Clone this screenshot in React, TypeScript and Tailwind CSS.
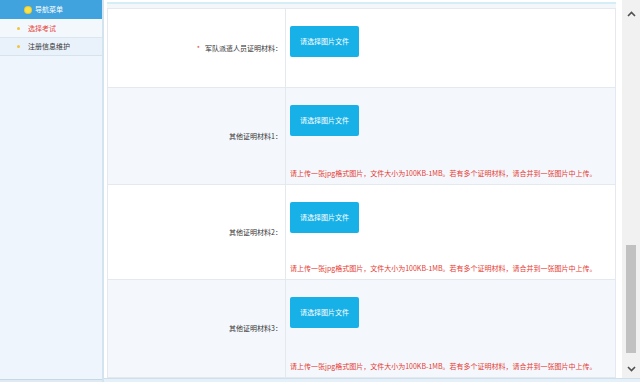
import React from "react";

const rows = [
  { label: "军队派遣人员证明材料：", star: true, h: "h-[78px]", bg: "bg-white", note: false },
  { label: "其他证明材料1：", star: false, h: "h-[97px]", bg: "bg-[#f4f8fd]", note: true },
  { label: "其他证明材料2：", star: false, h: "h-[95px]", bg: "bg-white", note: true },
  { label: "其他证明材料3：", star: false, h: "h-[98px]", bg: "bg-[#f4f8fd]", note: true },
];

export default function App() {
  return (
    <div
      className="flex h-[382px] w-[640px] overflow-hidden bg-white text-[7px] text-[#333]"
      style={{ fontFamily: '"Noto Sans CJK SC", "Noto Sans", sans-serif' }}
    >
      {/* Sidebar */}
      <div className="flex w-[104px] shrink-0 flex-col border-r-2 border-[#d3e3f0] bg-[#eef5fd]">
        <div className="flex h-[19px] items-center justify-center gap-[4px] bg-[#41a3dd] pr-[14px] text-white">
          <span className="h-[6px] w-[6px] rounded-full bg-[#f7e34a] ring-1 ring-[#e8c93a]" />
          <span>导航菜单</span>
        </div>
        <div className="flex h-[19px] items-center gap-[8px] border-b border-[#dbe6ef] bg-[#f3f8fd] pl-[17px] text-[#e8443a]">
          <span className="h-[3px] w-[3px] rounded-full bg-[#f0c53a]" />
          <span>选择考试</span>
        </div>
        <div className="flex h-[18px] items-center gap-[8px] border-b border-[#d6e2ec] bg-[#e9f2fb] pl-[17px] text-[#333]">
          <span className="h-[3px] w-[3px] rounded-full bg-[#f0c53a]" />
          <span>注册信息维护</span>
        </div>
        <div className="flex-1" />
        <div className="h-[3px] border-t border-[#c7d7e4] bg-[#dfeaf4]" />
      </div>

      {/* Main */}
      <div className="flex flex-1 flex-col">
        <div className="flex flex-1">
          <div className="flex flex-1 flex-col pl-[3px] pr-[6px]">
            <div className="mt-[2px] h-[2px] bg-[#d4eef5]" />
            <div className="h-[4px] bg-[#f4f7f9]" />
            <div className="flex flex-col border border-[#e3e9ee]">
              {rows.map((r, i) => (
                <div
                  key={i}
                  className={`flex ${r.h} ${r.bg} ${i > 0 ? "border-t border-[#e3e9ee]" : ""}`}
                >
                  <div className="flex w-[178px] shrink-0 items-center justify-end border-r border-[#e3e9ee] pr-[3px]">
                    {r.star && <span className="mr-[5px] text-[#e8443a]">*</span>}
                    <span>{r.label}</span>
                  </div>
                  <div className="flex flex-1 flex-col justify-between pl-[4px] pt-[17px] pb-[6px]">
                    <button className="flex h-[31px] w-[69px] items-center justify-center rounded-[2px] bg-[#18b1e7] text-[7px] text-white">
                      请选择图片文件
                    </button>
                    {r.note && (
                      <div className="text-[7px] text-[#e53a32]">
                        请上传一张jpg格式图片，文件大小为100KB-1MB。若有多个证明材料，请合并到一张图片中上传。
                      </div>
                    )}
                  </div>
                </div>
              ))}
            </div>
          </div>

          {/* Scrollbar */}
          <div className="flex w-[18px] shrink-0 flex-col items-center bg-[#f1f1f1]">
            <div className="flex h-[28px] w-full items-center justify-center">
              <svg width="9" height="6" viewBox="0 0 9 6">
                <path d="M1 5 L4.5 1.5 L8 5" fill="none" stroke="#505050" strokeWidth="1.6" />
              </svg>
            </div>
            <div className="mt-[217px] h-[108px] w-[10px] bg-[#c1c1c1]" />
            <div className="flex-1" />
            <div className="flex h-[18px] w-full items-center justify-center">
              <svg width="9" height="6" viewBox="0 0 9 6">
                <path d="M1 1 L4.5 4.5 L8 1" fill="none" stroke="#505050" strokeWidth="1.6" />
              </svg>
            </div>
          </div>
        </div>
        <div className="h-[4px] border-t border-[#cfe0ec] bg-[#e6f0f8]" />
      </div>
    </div>
  );
}
